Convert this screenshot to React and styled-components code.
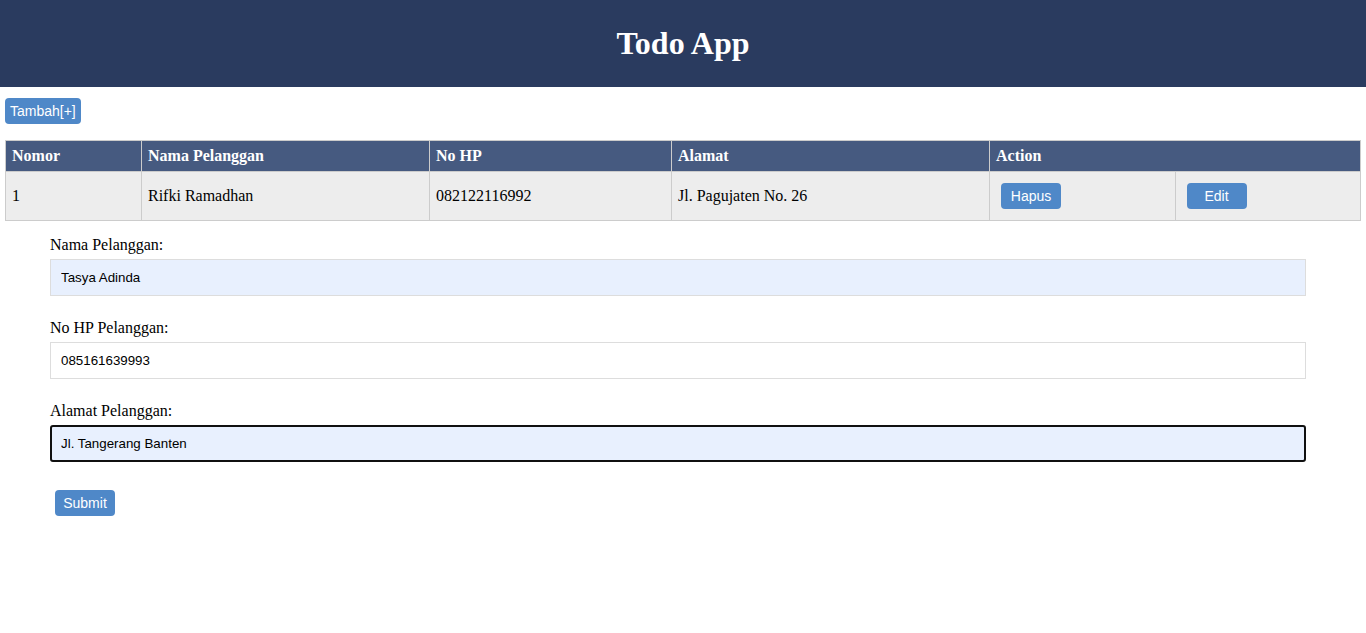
import styled, { createGlobalStyle } from "styled-components"

const GlobalStyle = createGlobalStyle`
    body {
        margin: 0;
        font-family: "Liberation Serif", "Times New Roman", serif;
        background: #ffffff;
        color: #000000;
    }
`

const Header = styled.header`
    height: 87px;
    background-color: #2a3b5f;
    display: flex;
    align-items: center;
    justify-content: center;
`

const Title = styled.h1`
    margin: 0;
    color: #ffffff;
    font-size: 32px;
    font-weight: bold;
`

const Main = styled.main`
    padding: 11px 5px 0;
`

const Button = styled.button`
    display: inline-flex;
    align-items: center;
    justify-content: center;
    height: 26px;
    min-width: ${props => props.$wide ? "auto" : "60px"};
    padding: 0 5px;
    border: none;
    border-radius: 4px;
    background-color: #4f88c8;
    color: #ffffff;
    font-family: "Liberation Sans", Arial, sans-serif;
    font-size: 14px;
    cursor: pointer;
`

const Table = styled.table`
    width: 100%;
    margin-top: 16px;
    border-collapse: collapse;
    border: 1px solid #cccccc;
`

const Th = styled.th`
    width: ${props => props.$w};
    padding: 6px;
    line-height: 18px;
    text-align: left;
    background-color: #465a80;
    color: #ffffff;
    font-size: 16px;
    border: 1px solid #cccccc;
    border-top: none;
    border-bottom: none;
`

const Td = styled.td`
    padding: 11px 6px;
    line-height: 18px;
    background-color: #ededed;
    font-size: 16px;
    border: 1px solid #cccccc;
`

const ActionTd = styled(Td)`
    padding: 11px 11px;
`

const Form = styled.form`
    padding: 15px 60px 0 50px;
`

const Label = styled.label`
    display: block;
    font-size: 16px;
    line-height: 18px;
    margin-bottom: 5px;
`

const Input = styled.input`
    display: block;
    box-sizing: border-box;
    width: 100%;
    height: 37px;
    margin: 0 0 23px;
    padding: 0 10px;
    border: 1px solid #dddddd;
    background-color: ${props => props.$filled ? "#e8f0fe" : "#ffffff"};
    font-family: "Liberation Sans", Arial, sans-serif;
    font-size: 13.33px;
    color: #000000;

    &:focus {
        outline: none;
    }

    ${props => props.$focused && `
        border: 2px solid #101010;
        border-radius: 3px;
        padding: 0 9px;
    `}
`

const SubmitRow = styled.div`
    padding: 5px 0 0 5px;
`

const App = () => {
    return (
        <>
            <GlobalStyle />
            <Header>
                <Title>Todo App</Title>
            </Header>
            <Main>
                <Button $wide>Tambah[+]</Button>
                <Table>
                    <thead>
                        <tr>
                            <Th $w="123px">Nomor</Th>
                            <Th $w="275px">Nama Pelanggan</Th>
                            <Th $w="229px">No HP</Th>
                            <Th $w="305px">Alamat</Th>
                            <Th colSpan={2}>Action</Th>
                        </tr>
                    </thead>
                    <tbody>
                        <tr>
                            <Td>1</Td>
                            <Td>Rifki Ramadhan</Td>
                            <Td>082122116992</Td>
                            <Td>Jl. Pagujaten No. 26</Td>
                            <ActionTd><Button>Hapus</Button></ActionTd>
                            <ActionTd><Button>Edit</Button></ActionTd>
                        </tr>
                    </tbody>
                </Table>
            </Main>
            <Form onSubmit={e => e.preventDefault()}>
                <Label>Nama Pelanggan:</Label>
                <Input $filled defaultValue="Tasya Adinda" />
                <Label>No HP Pelanggan:</Label>
                <Input defaultValue="085161639993" />
                <Label>Alamat Pelanggan:</Label>
                <Input $filled $focused defaultValue="Jl. Tangerang Banten" />
                <SubmitRow>
                    <Button type="submit">Submit</Button>
                </SubmitRow>
            </Form>
        </>
    )
}

export default App
